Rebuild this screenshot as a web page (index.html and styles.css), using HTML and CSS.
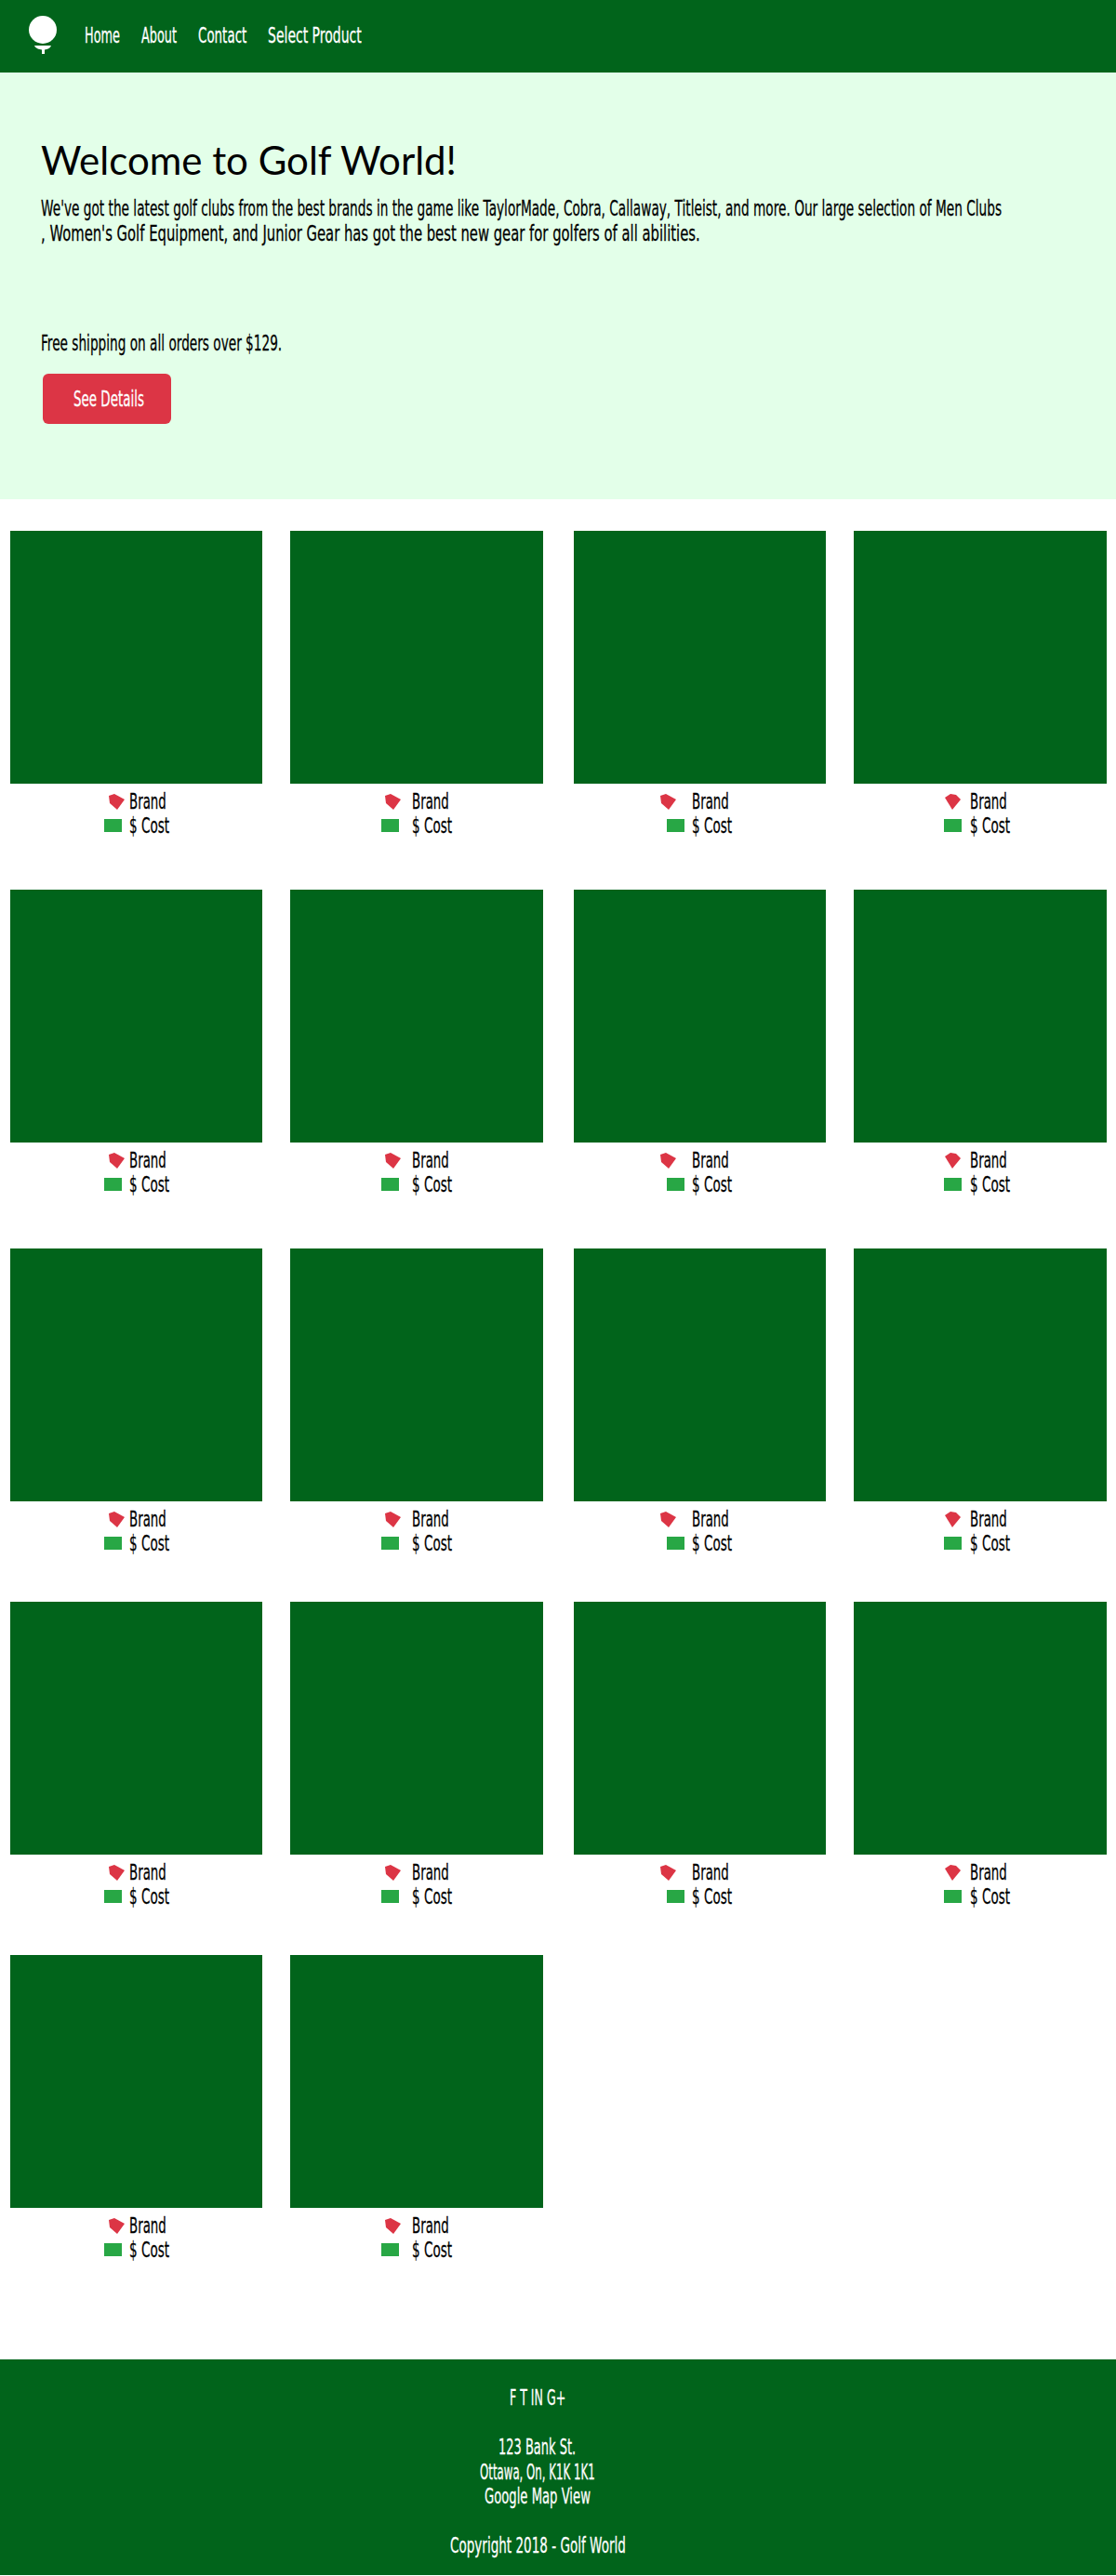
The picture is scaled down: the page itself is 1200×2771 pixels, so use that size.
FILE: index.html
```html
<!DOCTYPE html>
<html lang="en">
<head>
    <meta charset="UTF-8">
    <meta name="viewport" content="width=device-width, initial-scale=1.0">
    <title>Golf World</title>
    <link rel="stylesheet" href="styles.css">
</head>
<body>

    <header class="top-bar">
        <svg class="logo" width="30" height="41" viewBox="0 0 30 41">
            <circle cx="15" cy="15" r="15" fill="#fff"/>
            <path d="M6 32h18c-1 3-4 4-7 4.500v4.500h-3v-4.500c-3-.5-7-1.500-8-4.500z" fill="#fff"/>
        </svg>
        <nav>
            <ul class="nav-list">
                <li><a class="fit" data-w="38" href="#">Home</a></li>
                <li><a class="fit" data-w="38" href="#">About</a></li>
                <li><a class="fit" data-w="52" href="#">Contact</a></li>
                <li><a class="fit" data-w="101" href="#">Select Product</a></li>
            </ul>
        </nav>
    </header>

    <section class="hero">
        <h1>Welcome to Golf World!</h1>
        <p class="hero-text">
            <span class="fit" data-w="1033">We've got the latest golf clubs from the best brands in the game like TaylorMade, Cobra, Callaway, Titleist, and more. Our large selection of Men Clubs</span><br>
            <span class="fit" data-w="709">, Women's Golf Equipment, and Junior Gear has got the best new gear for golfers of all abilities.</span>
        </p>
        <p class="hero-ship"><span class="fit" data-w="259">Free shipping on all orders over $129.</span></p>
        <a class="details-btn" href="#"><span class="fit" data-w="76">See Details</span></a>
    </section>

    <main id="products" class="products"></main>

    <footer class="site-footer">
        <p><span class="fit" data-w="60">F T IN G+</span></p>
        <p>
            <span class="fit" data-w="83">123 Bank St.</span><br>
            <span class="fit" data-w="124">Ottawa, On, K1K 1K1</span><br>
            <span class="fit" data-w="114">Google Map View</span>
        </p>
        <p><span class="fit" data-w="189">Copyright 2018 - Golf World</span></p>
    </footer>

    <script src="script.js"></script>

</body>
</html>
```

FILE: styles.css
```css
/* Basic Styling */
body {
    font-family: "DejaVu Sans", sans-serif;
    font-size: 23px;
    margin: 0;
    padding: 0;
    background-color: #fff;
    color: #000;
}

/* Squeezed text, script.js works out the scale */
.fit {
    display: inline-block;
    white-space: nowrap;
    transform-origin: left center;
    -webkit-text-stroke: 0.3px currentColor;
}

.top-bar {
    height: 78px;
    background-color: #01641b;
    display: flex;
    align-items: center;
    padding-left: 31px;
    box-sizing: border-box;
}

.logo {
    margin-top: -3px;
}

.nav-list {
    list-style: none;
    display: flex;
    gap: 23px;
    margin: -2px 0 0 30px;
    padding: 0;
}

.nav-list a {
    color: #fff;
    text-decoration: none;
}

.hero {
    height: 459px;
    box-sizing: border-box;
    background-color: #e3ffe9;
    padding: 69px 44px 0;
}

.hero h1 {
    font-family: Lato, sans-serif;
    font-weight: 400;
    font-size: 42px;
    line-height: 50px;
    margin: 0 0 14px;
}

.hero-text {
    line-height: 26.5px;
    margin: 0;
}

.hero-ship {
    line-height: 26.5px;
    margin: 92px 0 19px;
}

.details-btn {
    display: block;
    width: 135px;
    height: 54px;
    line-height: 54px;
    margin-left: 2px;
    padding-left: 3px;
    text-align: center;
    background-color: #dc3545;
    color: #fff;
    border-radius: 6px;
    text-decoration: none;
}

.products {
    padding: 34px 10px 105px 11px;
}

.product-row {
    display: grid;
    grid-template-columns: 271px 272px 274px 272px;
    column-gap: 30px;
    margin-bottom: 56px;
}

.product-row:nth-child(n+3) {
    margin-bottom: 50px;
}

.product-row:last-child {
    margin-bottom: 0;
}

.product:nth-child(3) {
    margin-left: 3px;
}

.product-image {
    height: 272px;
    margin-bottom: 6px;
    background-color: #01641b;
}

.product-line {
    display: flex;
    align-items: center;
    height: 26px;
    line-height: 26px;
}

.tag-icon {
    flex: none;
    display: block;
}

.cost-icon {
    flex: none;
    width: 19px;
    height: 14px;
    background-color: #28a745;
}

.site-footer {
    height: 232px;
    box-sizing: border-box;
    background-color: #01641b;
    color: #fff;
    text-align: center;
    line-height: 26.5px;
    padding: 28px 44px 0 0;
}

.site-footer p {
    margin: 0 0 26.5px;
}
```

FILE: script.js
```js
const tagLeft = "M0 2L6 0l11 6-8 11-8-7z";
const tagRight = "M0 4l6-4 6 1 5 5-9 11z";

// Where things start inside each column, the site has them a bit off in every column
const columns = [
    { tag: 106, cost: 101, text: 128, path: tagLeft },
    { tag: 102, cost: 98, text: 130.7, path: tagLeft },
    { tag: 93, cost: 99.7, text: 126.7, path: tagLeft },
    { tag: 98, cost: 97, text: 125, path: tagRight }
];

function productCard(col) {
    let tagWidth = 17;
    let costWidth = 19;
    return `
        <div class="product">
            <div class="product-image"></div>
            <div class="product-line">
                <svg class="tag-icon" style="margin-left:${col.tag}px" width="17" height="17" viewBox="0 0 17 17"><path d="${col.path}" fill="#dc3545"/></svg>
                <span class="fit" data-w="40" style="margin-left:${col.text - col.tag - tagWidth}px">Brand</span>
            </div>
            <div class="product-line">
                <div class="cost-icon" style="margin-left:${col.cost}px"></div>
                <span class="fit" data-w="43" style="margin-left:${col.text - col.cost - costWidth}px">$ Cost</span>
            </div>
        </div>
    `;
}

// Rows of four, last row has only two
const rows = [4, 4, 4, 4, 2];
const products = document.getElementById("products");

rows.forEach((count) => {
    let row = document.createElement("div");
    row.className = "product-row";
    for (let i = 0; i < count; i++) {
        row.innerHTML += productCard(columns[i]);
    }
    products.appendChild(row);
});

// Squeeze each text to its width and take the spare room out of the flow
document.querySelectorAll(".fit").forEach((el) => {
    let target = Number(el.dataset.w);
    let width = el.offsetWidth;
    el.style.transform = `scaleX(${target / width})`;
    el.style.marginRight = `${target - width}px`;
});
```
